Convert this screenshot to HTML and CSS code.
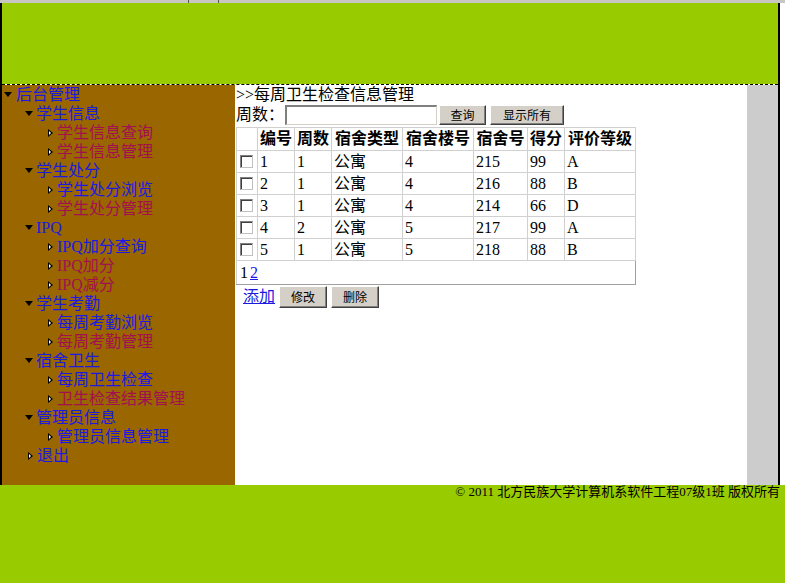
FILE: index.html
```html
<!DOCTYPE html>
<html>
<head>
<meta charset="utf-8">
<title>每周卫生检查信息管理</title>
<link rel="stylesheet" href="styles.css">
</head>
<body>
<div class="topstrip"><span class="sep s1"></span><span class="sep s2"></span></div>
<div class="wrap">
  <div class="header"></div>
  <div class="main">
    <div class="side">
      <div class="row l1"><span class="ic down"></span><a class="b">后台管理</a></div>
      <div class="row l2"><span class="ic down"></span><a class="b">学生信息</a></div>
      <div class="row l3"><span class="ic leaf"></span><a class="r">学生信息查询</a></div>
      <div class="row l3"><span class="ic leaf"></span><a class="r">学生信息管理</a></div>
      <div class="row l2"><span class="ic down"></span><a class="b">学生处分</a></div>
      <div class="row l3"><span class="ic leaf"></span><a class="b">学生处分浏览</a></div>
      <div class="row l3"><span class="ic leaf"></span><a class="r">学生处分管理</a></div>
      <div class="row l2"><span class="ic down"></span><a class="b">IPQ</a></div>
      <div class="row l3"><span class="ic leaf"></span><a class="b">IPQ加分查询</a></div>
      <div class="row l3"><span class="ic leaf"></span><a class="r">IPQ加分</a></div>
      <div class="row l3"><span class="ic leaf"></span><a class="r">IPQ减分</a></div>
      <div class="row l2"><span class="ic down"></span><a class="b">学生考勤</a></div>
      <div class="row l3"><span class="ic leaf"></span><a class="b">每周考勤浏览</a></div>
      <div class="row l3"><span class="ic leaf"></span><a class="r">每周考勤管理</a></div>
      <div class="row l2"><span class="ic down"></span><a class="b">宿舍卫生</a></div>
      <div class="row l3"><span class="ic leaf"></span><a class="b">每周卫生检查</a></div>
      <div class="row l3"><span class="ic leaf"></span><a class="r">卫生检查结果管理</a></div>
      <div class="row l2"><span class="ic down"></span><a class="b">管理员信息</a></div>
      <div class="row l3"><span class="ic leaf"></span><a class="b">管理员信息管理</a></div>
      <div class="row l2x"><span class="ic leaf"></span><a class="b">退出</a></div>
    </div>
    <div class="content">
      <div class="title">&gt;&gt;每周卫生检查信息管理</div>
      <div class="search">
        <span class="lbl">周数：</span><input class="inp" type="text"><button class="btn w47">查询</button><button class="btn w74">显示所有</button>
      </div>
      <table class="grid">
        <colgroup>
          <col style="width:21px"><col style="width:37px"><col style="width:37px"><col style="width:71px"><col style="width:71px"><col style="width:54px"><col style="width:37px"><col style="width:71px">
        </colgroup>
        <tr class="head"><th></th><th>编号</th><th>周数</th><th>宿舍类型</th><th>宿舍楼号</th><th>宿舍号</th><th>得分</th><th>评价等级</th></tr>
        <tr><td class="cb"><span class="chk"></span></td><td>1</td><td>1</td><td>公寓</td><td>4</td><td>215</td><td>99</td><td>A</td></tr>
        <tr><td class="cb"><span class="chk"></span></td><td>2</td><td>1</td><td>公寓</td><td>4</td><td>216</td><td>88</td><td>B</td></tr>
        <tr><td class="cb"><span class="chk"></span></td><td>3</td><td>1</td><td>公寓</td><td>4</td><td>214</td><td>66</td><td>D</td></tr>
        <tr><td class="cb"><span class="chk"></span></td><td>4</td><td>2</td><td>公寓</td><td>5</td><td>217</td><td>99</td><td>A</td></tr>
        <tr><td class="cb"><span class="chk"></span></td><td>5</td><td>1</td><td>公寓</td><td>5</td><td>218</td><td>88</td><td>B</td></tr>
        <tr class="pager"><td colspan="8">1<a class="pg">2</a></td></tr>
      </table>
      <div class="actions">
        <a class="add">添加</a><button class="btn w48">修改</button><button class="btn w48">删除</button>
      </div>
    </div>
    <div class="gutter"></div>
  </div>
</div>
<div class="footer"><div class="foot-in">© 2011 北方民族大学计算机系软件工程07级1班 版权所有</div></div>
</body>
</html>
```
FILE: styles.css
```css
html, body {
  margin: 0;
  padding: 0;
  background: #ffffff;
  font-family: "Liberation Serif", "Noto Sans CJK SC", serif;
  font-size: 16px;
  color: #000;
}
.topstrip {
  height: 3px;
  background: #c8c6c0;
  position: relative;
}
.sep {
  position: absolute;
  top: 0;
  width: 1px;
  height: 3px;
  background: #555;
}
.s1 { left: 188px; }
.s2 { left: 218px; }
.wrap {
  width: 776px;
  border-left: 2px solid #000;
  border-right: 2px solid #000;
  background: #fff;
}
.header {
  height: 81px;
  background: #99cc00;
  border-bottom: 1px dashed #000;
  background-clip: padding-box;
}
.main {
  display: flex;
  height: 400px;
}
.side {
  width: 233px;
  background: #996600;
}
.row {
  height: 19px;
  line-height: 19px;
  display: flex;
  align-items: center;
  white-space: nowrap;
}
.row a { line-height: 19px; }
.l1 { padding-left: 2px; }
.l2 { padding-left: 23px; }
.l3 { padding-left: 46px; }
.l2x { padding-left: 26px; }
.ic { display: inline-block; flex: none; }
.down {
  width: 0;
  height: 0;
  border-left: 4.5px solid transparent;
  border-right: 4.5px solid transparent;
  border-top: 5px solid #000;
  margin-right: 4px;
}
.l2 .down { margin-right: 3px; }
.leaf {
  width: 0;
  height: 0;
  border-top: 4px solid transparent;
  border-bottom: 4px solid transparent;
  border-left: 5px solid #000;
  margin-right: 4px;
  position: relative;
}
.leaf::after {
  content: "";
  position: absolute;
  left: -4px;
  top: -2px;
  border-top: 2px solid transparent;
  border-bottom: 2px solid transparent;
  border-left: 2.5px solid #fff;
}
.b { color: #1a1ae0; }
.r { color: #a3104f; }
.content {
  width: 512px;
  background: #fff;
  padding-left: 1px;
  box-sizing: border-box;
}
.title {
  height: 19px;
  line-height: 19px;
}
.search {
  display: flex;
  align-items: center;
  height: 22px;
}
.lbl { width: 49px; line-height: 20px; }
.inp {
  width: 152px;
  height: 20px;
  box-sizing: border-box;
  border-top: 2px solid #808080;
  border-left: 2px solid #808080;
  border-right: 1px solid #d4d0c8;
  border-bottom: 1px solid #d4d0c8;
  margin: 0 2px 0 0;
  padding: 0;
  background: #fff;
}
.btn {
  height: 20px;
  box-sizing: border-box;
  background: #d4d0c8;
  border-top: 1px solid #fff;
  border-left: 1px solid #fff;
  border-right: 1px solid #404040;
  border-bottom: 1px solid #404040;
  box-shadow: inset -1px -1px 0 #808080;
  font-family: "Noto Sans CJK SC", "Liberation Sans", sans-serif;
  font-size: 12px;
  line-height: 16px;
  padding: 0;
  color: #000;
  margin: 0 4px 0 0;
}
.w47 { width: 47px; }
.w74 { width: 74px; }
.w48 { width: 48px; height: 22px; }
.grid {
  border-collapse: collapse;
  table-layout: fixed;
  width: 399px;
  margin-top: 1px;
  border: 1px solid #a0a0a0;
}
.grid th, .grid td {
  border: 1px solid #d0d0d0;
  padding: 0 2px;
  height: 21px;
  line-height: 18px;
  text-align: left;
  white-space: nowrap;
  overflow: hidden;
}
.grid th {
  font-weight: bold;
  text-align: center;
  height: 22px;
  padding: 0;
}
.grid td.cb { padding: 0 0 0 3px; }
.chk {
  display: block;
  width: 13px;
  height: 13px;
  box-sizing: border-box;
  border-top: 1px solid #808080;
  border-left: 1px solid #808080;
  border-right: 1px solid #c0c0c0;
  border-bottom: 1px solid #c0c0c0;
  background: #fff;
  box-shadow: inset 1px 1px 0 #404040;
}
.pager td {
  height: 23px;
  padding-left: 3px;
  border-right: 1px solid #a0a0a0;
  border-bottom: 1px solid #a0a0a0;
}
.pg { color: #1a1ae0; text-decoration: underline; margin-left: 2px; }
.actions {
  display: flex;
  align-items: center;
  height: 24px;
  padding-left: 7px;
}
.add {
  color: #1a1ae0;
  text-decoration: underline;
  margin-right: 4px;
  line-height: 20px;
}
.gutter {
  width: 31px;
  background: #cccccc;
}
.footer {
  height: 98px;
  background: #99cc00;
}
.foot-in {
  width: 780px;
  text-align: right;
  font-size: 13px;
  line-height: 14px;
  padding-top: 0;
}
```
